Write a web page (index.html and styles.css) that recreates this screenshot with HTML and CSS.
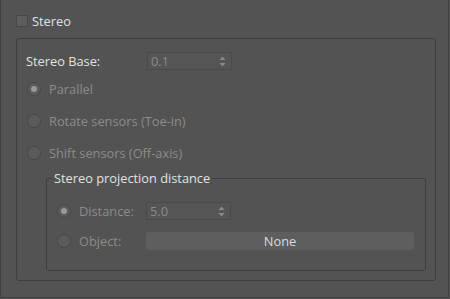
FILE: index.html
```html
<!DOCTYPE html>
<html lang="en">
<head>
    <meta charset="UTF-8">
    <title>Stereo</title>
    <link rel="stylesheet" href="styles.css">
</head>
<body>
    <div class="panel">
        <label class="check-row">
            <span class="checkbox"></span>
            <span class="text-on">Stereo</span>
        </label>

        <div class="group">
            <div class="row base-row">
                <span class="base-label text-on">Stereo Base:</span>
                <div class="spinner">
                    <span>0.1</span>
                    <svg class="arrows" width="7" height="11" viewBox="0 0 7 11"><path d="M3.5 0.5 L6.5 4 L0.5 4 Z M3.5 10.5 L6.5 7 L0.5 7 Z" fill="#8a8a8a"/></svg>
                </div>
            </div>
            <div class="row radio-row">
                <span class="radio checked"></span>
                <span class="text-off">Parallel</span>
            </div>
            <div class="row radio-row">
                <span class="radio"></span>
                <span class="text-off">Rotate sensors (Toe-in)</span>
            </div>
            <div class="row radio-row">
                <span class="radio"></span>
                <span class="text-off">Shift sensors (Off-axis)</span>
            </div>

            <fieldset class="subgroup">
                <legend class="text-on">Stereo projection distance</legend>
                <div class="sub-grid">
                    <span class="radio checked"></span>
                    <span class="text-off">Distance:</span>
                    <div class="spinner">
                        <span>5.0</span>
                        <svg class="arrows" width="7" height="11" viewBox="0 0 7 11"><path d="M3.5 0.5 L6.5 4 L0.5 4 Z M3.5 10.5 L6.5 7 L0.5 7 Z" fill="#8a8a8a"/></svg>
                    </div>
                    <span class="radio"></span>
                    <span class="text-off">Object:</span>
                    <div class="button">None</div>
                </div>
            </fieldset>
        </div>
    </div>
</body>
</html>
```

FILE: styles.css
```css
* {
    margin: 0;
    padding: 0;
    box-sizing: border-box;
}

body {
    background: #535353;
    font-family: 'Open Sans', 'Noto Sans', sans-serif;
    font-size: 12.8px;
    width: 450px;
    height: 299px;
    overflow: hidden;
}

.text-on {
    color: #e2e2e2;
}

.text-off {
    color: #8c8c8c;
}

.panel {
    width: 449px;
    height: 298px;
    border: 1px solid #414141;
    border-top: none;
    padding: 15px 0 0 15px;
}

.check-row {
    display: flex;
    align-items: center;
    gap: 4px;
    height: 12px;
}

.checkbox {
    width: 12px;
    height: 12px;
    background: #5d5d5d;
    border: 1px solid #474747;
}

.group {
    margin-top: 11px;
    width: 420px;
    height: 243px;
    border: 1px solid #3e3e3e;
    border-radius: 3px;
    padding: 13px 0 0 9px;
}

.row {
    display: flex;
    align-items: center;
}

.base-row {
    height: 18px;
}

.base-label {
    width: 121px;
}

.spinner {
    width: 85px;
    height: 18px;
    background: #555555;
    border: 1px solid #4a4a4a;
    display: flex;
    align-items: center;
    justify-content: space-between;
    padding: 0 5px 0 3px;
    color: #8a8a8a;
}

.arrows {
    display: block;
}

.radio-row {
    height: 32px;
    gap: 8px;
    padding-left: 1px;
}

.base-row + .radio-row {
    margin-top: 3px;
}

.radio {
    width: 14px;
    height: 14px;
    border-radius: 50%;
    background: #5b5b5b;
    border: 1px solid #474747;
    display: flex;
    align-items: center;
    justify-content: center;
}

.radio.checked::after {
    content: "";
    width: 6px;
    height: 6px;
    border-radius: 50%;
    background: #999999;
}

.subgroup {
    margin: 2px 0 0 20px;
    width: 380px;
    height: 100px;
    border: 1px solid #3e3e3e;
    border-radius: 3px;
    padding: 17px 0 0 0;
}

.subgroup legend {
    margin-left: 5px;
    padding: 0 2px;
    line-height: 14px;
}

.sub-grid {
    display: grid;
    grid-template-columns: 14px 59px 85px;
    grid-auto-rows: 18px;
    column-gap: 8px;
    row-gap: 12px;
    align-items: center;
    padding-left: 10px;
}

.button {
    width: 268px;
    height: 18px;
    background: #5e5e5e;
    border-radius: 3px;
    color: #dcdcdc;
    display: flex;
    align-items: center;
    justify-content: center;
}
```
